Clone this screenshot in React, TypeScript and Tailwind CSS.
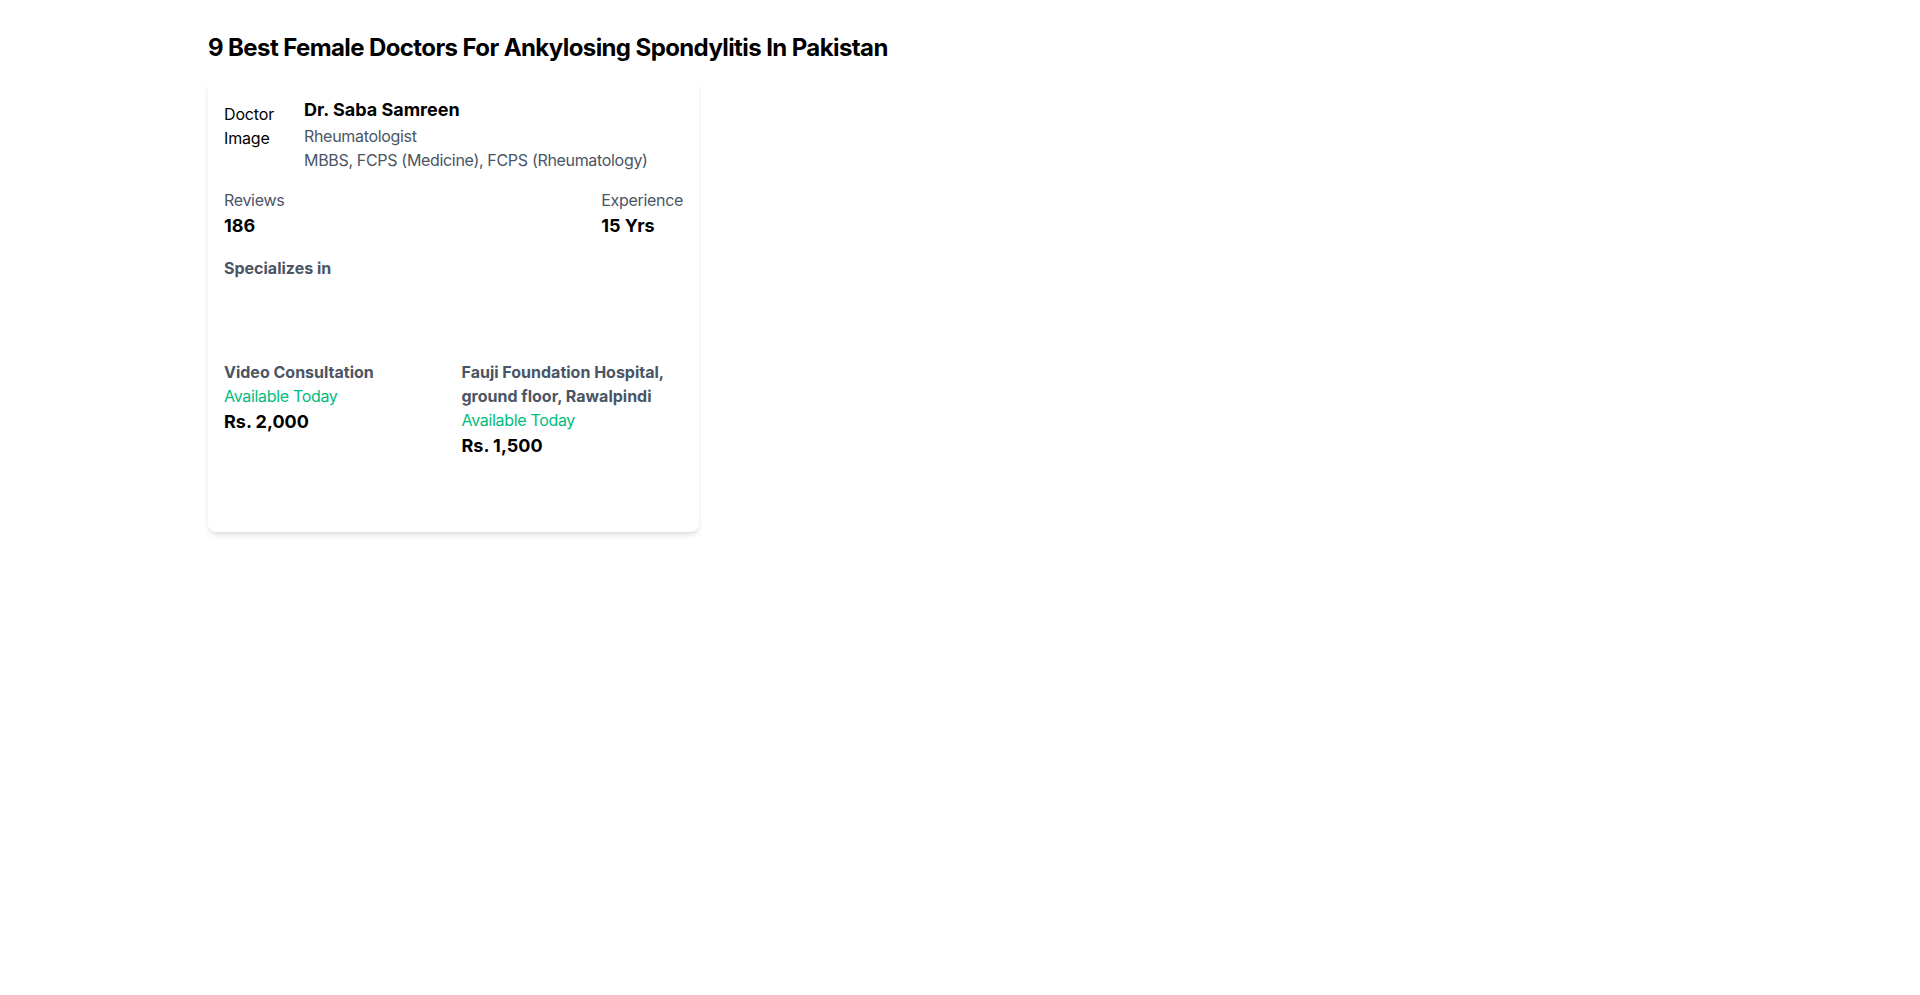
const doctor = {
  name: 'Dr. Saba Samreen',
  title: 'Rheumatologist',
  degrees: 'MBBS, FCPS (Medicine), FCPS (Rheumatology)',
  reviews: 186,
  experience: '15 Yrs',
  locations: [
    { place: 'Video Consultation', status: 'Available Today', fee: 'Rs. 2,000' },
    { place: 'Fauji Foundation Hospital, ground floor, Rawalpindi', status: 'Available Today', fee: 'Rs. 1,500' },
  ],
};

const Stat = ({ label, value }: { label: string; value: string | number }) => (
  <div>
    <div className="text-base text-gray-600 tracking-[-0.02em]">{label}</div>
    <div className="text-lg font-bold text-black">{value}</div>
  </div>
);

const App = () => {
  return (
    <div className="min-h-screen bg-white px-[208px] pt-8 font-['Inter',sans-serif] text-black">
      <h1 className="text-2xl font-bold tracking-tight mb-4">9 Best Female Doctors For Ankylosing Spondylitis In Pakistan</h1>
      <div className="w-[491px] bg-white rounded-lg shadow-md p-4">
        <div className="flex gap-4">
          <div className="w-16 shrink-0 mt-[6px] text-base leading-6 tracking-[-0.01em]">Doctor Image</div>
          <div>
            <div className="text-lg font-bold">{doctor.name}</div>
            <div className="text-base text-gray-600 tracking-[-0.02em]">{doctor.title}</div>
            <div className="text-base text-gray-600 tracking-[-0.02em]">{doctor.degrees}</div>
          </div>
        </div>
        <div className="flex justify-between mt-4">
          <Stat label="Reviews" value={doctor.reviews} />
          <Stat label="Experience" value={doctor.experience} />
        </div>
        <div className="mt-4 text-base font-bold text-gray-600">Specializes in</div>
        <div className="grid grid-cols-2 gap-4 mt-20">
          {doctor.locations.map(loc => (
            <div key={loc.place}>
              <div className="text-base font-bold text-gray-600">{loc.place}</div>
              <div className="text-base text-emerald-500 tracking-[-0.02em]">{loc.status}</div>
              <div className="text-lg font-bold">{loc.fee}</div>
            </div>
          ))}
        </div>
        <div className="h-14"></div>
      </div>
    </div>
  );
};

export default App;
